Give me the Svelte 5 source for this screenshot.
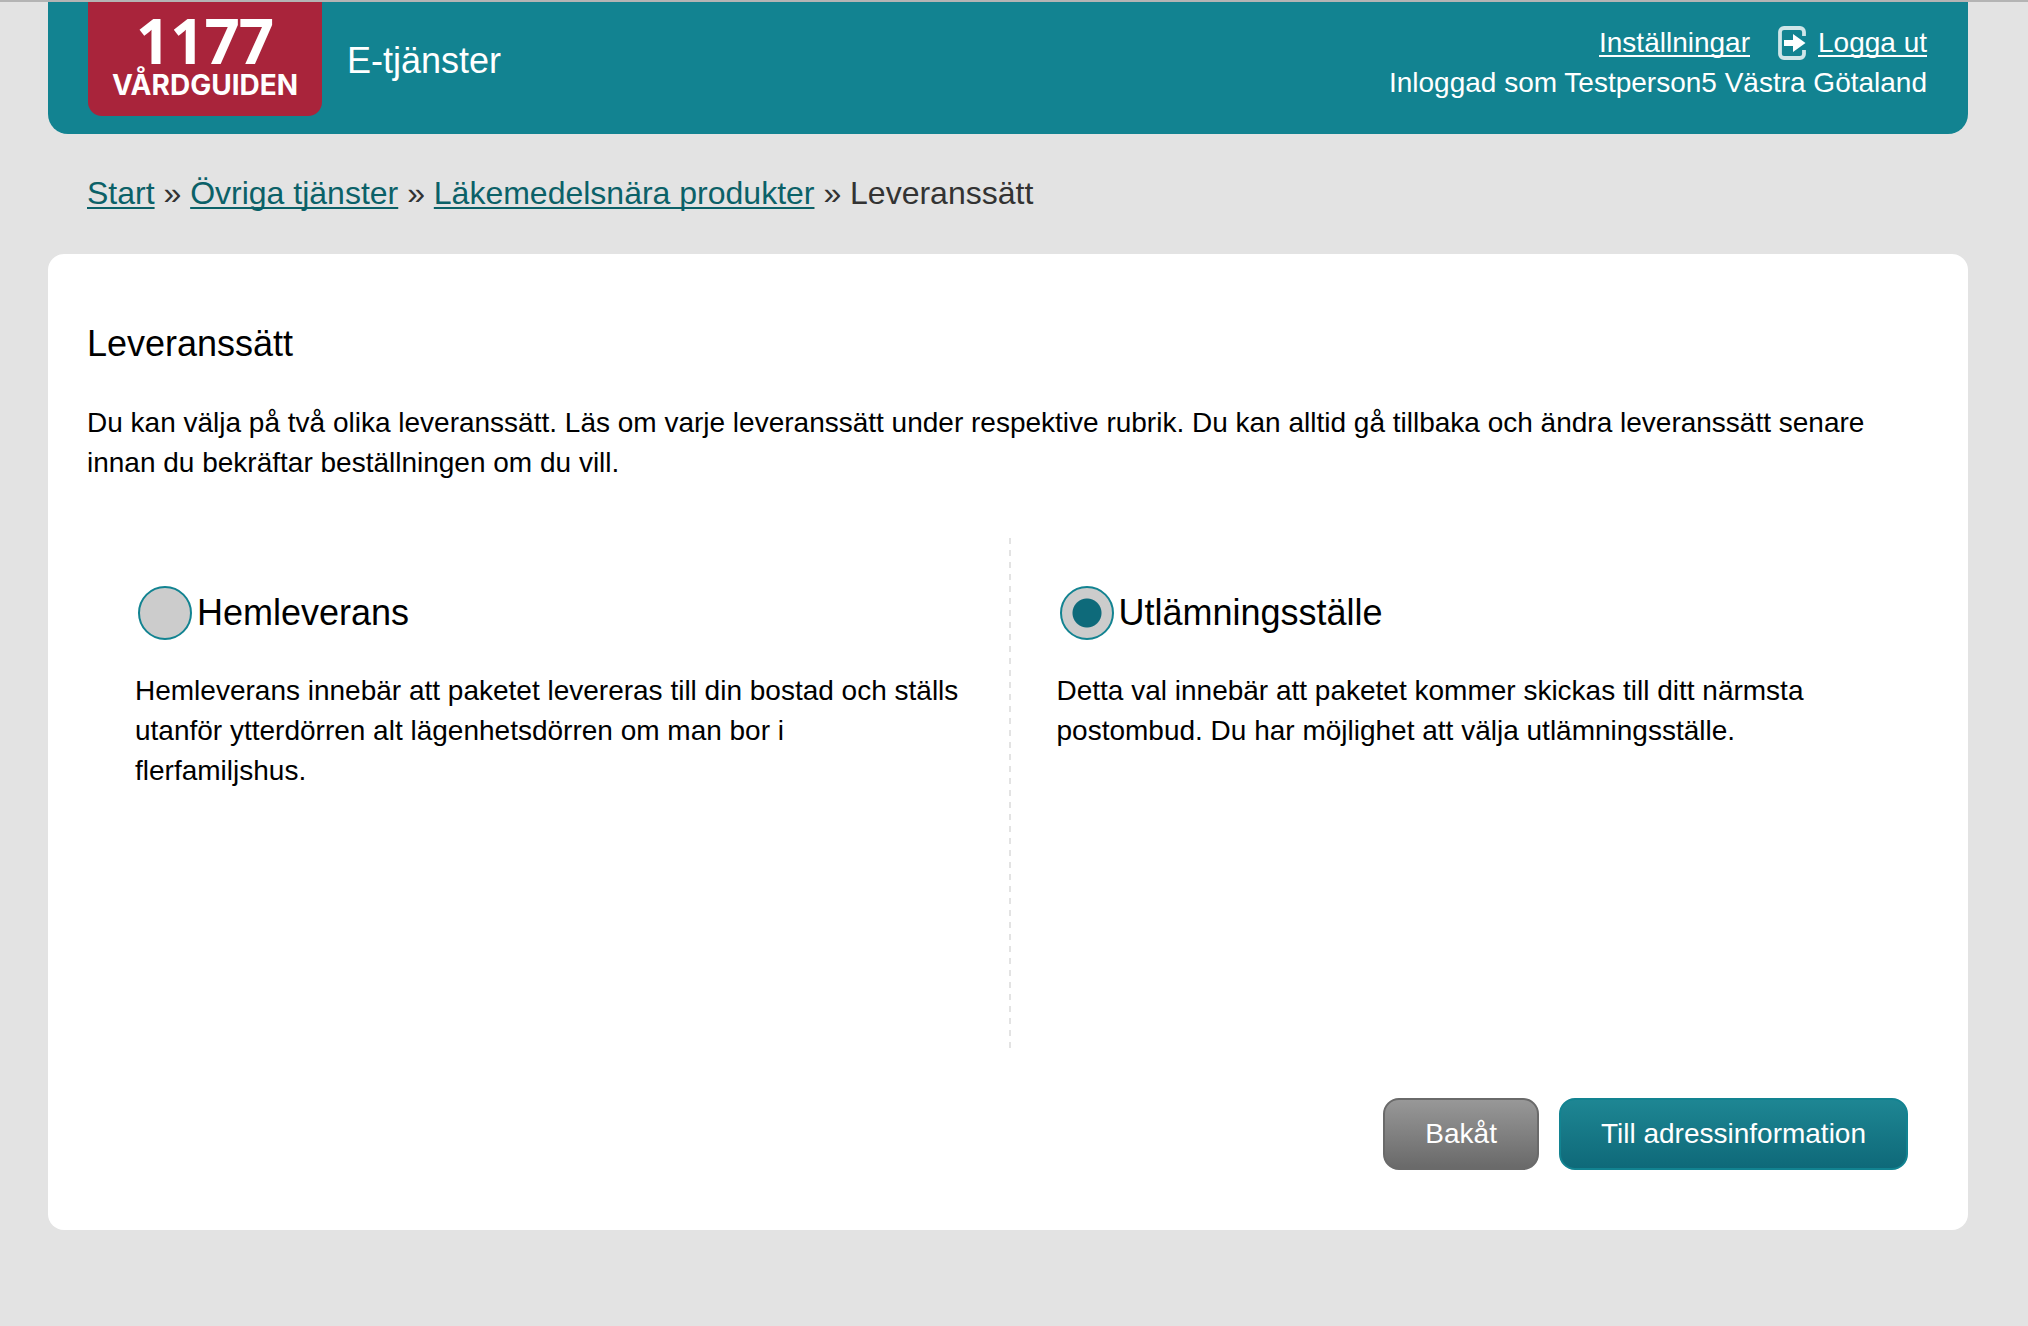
<script>
  let delivery = $state('pickup');

  const crumbs = ['Start', 'Övriga tjänster', 'Läkemedelsnära produkter'];

  const options = [
    {
      value: 'home',
      title: 'Hemleverans',
      text: 'Hemleverans innebär att paketet levereras till din bostad och ställs utanför ytterdörren alt lägenhetsdörren om man bor i flerfamiljshus.'
    },
    {
      value: 'pickup',
      title: 'Utlämningsställe',
      text: 'Detta val innebär att paketet kommer skickas till ditt närmsta postombud. Du har möjlighet att välja utlämningsställe.'
    }
  ];
</script>

<div class="page">
  <header class="header">
    <a class="logo" href="#start">
      <span class="logo-number">1177</span>
      <span class="logo-name">VÅRDGUIDEN</span>
    </a>
    <span class="site">E-tjänster</span>
    <div class="account">
      <div class="account-links">
        <a href="#settings">Inställningar</a>
        <svg class="exit" viewBox="0 0 28 34" aria-hidden="true">
          <path d="M26 10V6a4 4 0 0 0-4-4H6a4 4 0 0 0-4 4v22a4 4 0 0 0 4 4h16a4 4 0 0 0 4-4v-4" fill="none" stroke="#cfe5e8" stroke-width="3.8" />
          <path d="M6 14h9V8l12.500 9L15 26V20H6z" fill="#fff" />
        </svg>
        <a href="#logout">Logga ut</a>
      </div>
      <div>Inloggad som Testperson5 Västra Götaland</div>
    </div>
  </header>

  <nav class="crumbs" aria-label="Brödsmulor">
    {#each crumbs as crumb}
      <a href="#{crumb}">{crumb}</a>{' » '}
    {/each}
    <span>Leveranssätt</span>
  </nav>

  <main class="card">
    <h1>Leveranssätt</h1>
    <p class="intro">
      Du kan välja på två olika leveranssätt. Läs om varje leveranssätt under respektive rubrik. Du kan
      alltid gå tillbaka och ändra leveranssätt senare innan du bekräftar beställningen om du vill.
    </p>

    <div class="options">
      {#each options as option}
        <section class="option">
          <label>
            <input type="radio" name="delivery" value={option.value} bind:group={delivery} />
            {option.title}
          </label>
          <p>{option.text}</p>
        </section>
      {/each}
    </div>

    <div class="actions">
      <button type="button" class="back">Bakåt</button>
      <button type="button" class="next">Till adressinformation</button>
    </div>
  </main>
</div>

<style>
  :global(body) {
    background: #e3e3e3;
  }

  .page {
    border-top: 2px solid #b4b4b4;
    padding: 0 60px 96px 48px;
    font: 28px/40px 'Liberation Sans', Arial, sans-serif;
    color: #000;
  }

  .header {
    display: flex;
    align-items: flex-start;
    padding: 0 41px 0 40px;
    min-height: 132px;
    box-sizing: border-box;
    border-radius: 0 0 20px 20px;
    background: #128391;
    color: #fff;
  }

  .header a {
    color: #fff;
  }

  .header .logo {
    display: flex;
    flex-direction: column;
    align-items: center;
    width: 234px;
    height: 114px;
    border-radius: 0 0 14px 14px;
    background: #a9243b;
    text-decoration: none;
  }

  .logo-number {
    margin-top: 6px;
    font-family: 'Open Sans', sans-serif;
    font-size: 60px;
    line-height: 64px;
    font-weight: 600;
    -webkit-text-stroke: 2px #fff;
    stroke-linejoin: round;
  }

  .logo-name {
    font-family: Inter, sans-serif;
    font-size: 28px;
    line-height: 26px;
    font-weight: 700;
  }

  .site {
    margin-left: 25px;
    padding-top: 39px;
    font-size: 36px;
  }

  .account {
    margin-left: auto;
    padding-top: 21px;
    text-align: right;
  }

  .account-links {
    display: flex;
    justify-content: flex-end;
    align-items: center;
  }

  .account a,
  .crumbs a {
    text-decoration-thickness: 2px;
    text-underline-offset: 3px;
    text-decoration-skip-ink: none;
  }

  .exit {
    width: 28px;
    height: 34px;
    margin: 0 12px 0 28px;
  }

  .crumbs {
    padding: 39px 39px 41px;
    font-size: 32px;
    color: #333;
  }

  .crumbs a {
    color: #0b6168;
  }

  .card {
    padding: 70px 38px 60px 39px;
    border-radius: 16px;
    background: #fff;
  }

  h1 {
    margin: 0;
    font-size: 36px;
    font-weight: 400;
  }

  p {
    margin: 0;
  }

  .intro {
    margin-top: 39px;
  }

  .options {
    display: grid;
    grid-template-columns: 1fr 1fr;
    min-height: 512px;
    margin-top: 55px;
  }

  .option {
    padding: 48px;
  }

  .option + .option {
    background: repeating-linear-gradient(#e3e3e3 0 6px, transparent 6px 12px) 0 0 / 2px 100% no-repeat;
  }

  .option label {
    display: flex;
    align-items: center;
    gap: 5px;
    margin-bottom: 31px;
    font-size: 36px;
  }

  .option input {
    appearance: none;
    box-sizing: border-box;
    width: 54px;
    height: 54px;
    margin: 0 0 0 3px;
    border: 2px solid #128391;
    border-radius: 50%;
    background: #ccc;
  }

  .option input:checked {
    background: radial-gradient(circle, #0e6a7a 14px, #ccc 15px);
  }

  .actions {
    display: flex;
    justify-content: flex-end;
    gap: 20px;
    margin-top: 48px;
    padding-right: 22px;
  }

  button {
    padding: 14px 40px;
    border: 2px solid;
    border-radius: 16px;
    font: inherit;
    color: #fff;
  }

  .back {
    border-color: #6a6a6a;
    background: linear-gradient(#999, #686868) border-box;
  }

  .next {
    border-color: #128391;
    background: linear-gradient(#1e8794, #0e6878) border-box;
  }
</style>
